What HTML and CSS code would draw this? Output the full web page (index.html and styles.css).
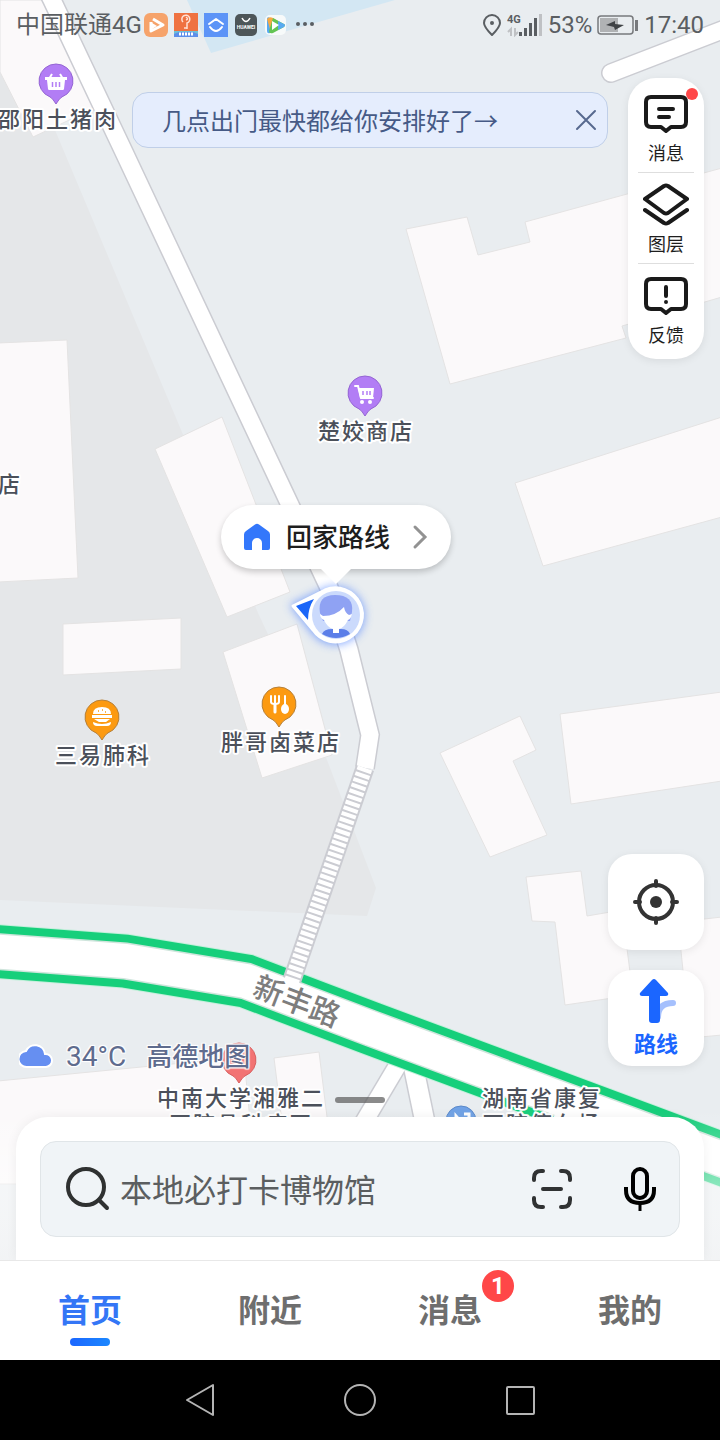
FILE: index.html
```html
<!DOCTYPE html>
<html lang="zh-CN">
<head>
    <meta charset="UTF-8">
    <meta name="viewport" content="width=device-width, initial-scale=1.0">
    <title>高德地图</title>
    <link rel="stylesheet" href="styles.css">
</head>
<body>
    <div class="app">
        <!-- map canvas -->
        <div class="map">
            <svg class="map-canvas" viewBox="0 0 720 1440" preserveAspectRatio="xMidYMin slice">
                <defs>
                    <path id="pin" d="M0 -17a17 17 0 0 1 6 32.900Q3.500 17 0 23Q-3.500 17 -6 15.900A17 17 0 0 1 0 -17z"/>
                    <filter id="glow" x="-50%" y="-50%" width="200%" height="200%">
                        <feGaussianBlur stdDeviation="5"/>
                    </filter>
                    <linearGradient id="fade" x1="0" y1="0" x2="0" y2="1">
                        <stop offset="0" stop-color="#fff" stop-opacity="0"/>
                        <stop offset="0.5" stop-color="#fff" stop-opacity="0.5"/>
                        <stop offset="1" stop-color="#f4f5f6" stop-opacity="0.8"/>
                    </linearGradient>
                </defs>

                <polygon class="zone" points="0,0 0,900 367,916 376,888 327,760 258,613 55,130 0,0"/>
                <polygon class="water" points="187,0 211,53 395,0"/>

                <g class="building">
                    <polygon points="0,0 46,0 95,108 33,137 0,72"/>
                    <polygon points="-2,343 67,340 78,578 -2,582"/>
                    <polygon points="155,449 222,417 290,592 227,617"/>
                    <polygon points="63,624 181,618 181,669 63,675"/>
                    <polygon points="223,652 297,624 332,755 262,778"/>
                    <polygon points="406,229 467,217 478,255 530,242 525,222 722,168 722,297 622,326 626,338 450,384"/>
                    <polygon points="515,483 722,417 722,517 543,566"/>
                    <polygon points="440,753 520,716 536,750 513,761 547,835 490,857"/>
                    <polygon points="560,714 722,692 722,781 571,804"/>
                    <polygon points="526,877 581,871 587,916 622,910 633,995 565,1005 555,922 532,921"/>
                    <polygon points="678,922 722,917 722,1035 690,1038"/>
                    <polygon points="-2,1081 244,1057 256,1184 -2,1184"/>
                    <polygon points="274,1058 319,1052 328,1125 283,1130"/>
                </g>

                <g class="road-edge">
                    <path d="M402 1058L358 1132" stroke-width="20"/>
                    <path d="M410 1050L427 1132" stroke-width="22"/>
                    <path d="M611 73L730 27" stroke-width="20" stroke-linecap="round"/>
                    <path d="M42 -20L52 0L123 150L283 490L330 590L349 650L370 735L365 768" stroke-width="20"/>
                </g>
                <g class="road-fill">
                    <path d="M402 1058L358 1132" stroke-width="17"/>
                    <path d="M410 1050L427 1132" stroke-width="19"/>
                    <path d="M611 73L730 27" stroke-width="17" stroke-linecap="round"/>
                    <path d="M42 -20L52 0L123 150L283 490L330 590L349 650L370 735L365 768" stroke-width="17"/>
                </g>

                <!-- main road with traffic -->
                <path class="traffic-edge" d="M-10 951L125 961L246 981L370 1028L730 1162"/>
                <path class="traffic" d="M-10 951L125 961L246 981L370 1028L730 1162"/>
                <path class="traffic-line" d="M-10 951L125 961L246 981L370 1028L730 1162"/>
                <path class="traffic-road" d="M-10 951L125 961L246 981L370 1028L730 1162"/>

                <!-- footpath steps -->
                <path class="steps-edge" d="M365 768L292 980"/>
                <path class="steps" d="M365 768L290 986"/>

                <text class="road-name" transform="translate(297 1001) rotate(21)" y="11" text-anchor="middle">新丰路</text>

                <!-- shops -->
                <g transform="translate(56 81)">
                    <use href="#pin" class="pin-purple"/>
                    <path fill="none" stroke="#fff" stroke-width="2" d="M-4 -7L-7 -2M4 -7L7 -2"/>
                    <path fill="#fff" d="M-11 -4h22v3h-2l-1 9q-.3 1-1 1h-14q-.7 0-1-1l-1-9h-2z"/>
                    <path stroke="#b27df5" stroke-width="1.500" d="M-3.500 1v5M0 1v5M3.500 1v5"/>
                </g>
                <g transform="translate(365 393)">
                    <use href="#pin" class="pin-purple"/>
                    <path fill="none" stroke="#fff" stroke-width="2" stroke-linecap="round" d="M-10 -7h3l3 12h12"/>
                    <path fill="#fff" d="M-7 -5H9L8 5H-5z"/>
                    <path stroke="#b27df5" stroke-width="1.500" d="M-2 -2v4M2 -2v4M5 -2v4"/>
                    <circle cx="-3" cy="9" r="2" fill="#fff"/>
                    <circle cx="5" cy="9" r="2" fill="#fff"/>
                </g>
                <g transform="translate(102 717)">
                    <use href="#pin" class="pin-orange"/>
                    <path fill="#fff" d="M-9 -3q0-7 9-7t9 7zM-10 -2h20v3h-20zM-9 5q9 4 18 0q0 4-4 4H-5q-4 0-4-4zM-8 2H8L4 5H-3z"/>
                    <path stroke="#fc9a11" stroke-width="1.500" d="M-4 -6h1M0 -7h1M3 -5h1"/>
                </g>
                <g transform="translate(279 704)">
                    <use href="#pin" class="pin-orange"/>
                    <path fill="none" stroke="#fff" stroke-width="2" stroke-linecap="round" d="M-8 -8v6q0 2 4 2t4-2v-6M-4 -8v16M6 -8V3"/>
                    <path stroke="#fff" stroke-width="3" stroke-linecap="round" d="M-4 0v8"/>
                    <ellipse cx="6" cy="5" rx="4" ry="5" fill="#fff"/>
                </g>
                <g transform="translate(239 1060)">
                    <use href="#pin" class="pin-red"/>
                </g>
                <g transform="translate(461 1121)">
                    <circle r="15" class="pin-blue"/>
                    <path fill="none" stroke="#fff" stroke-width="3" d="M-5 4v-9l7 8M3 -7h5v9"/>
                </g>

                <g class="poi-name">
                    <text x="-2" y="127">邵阳土猪肉</text>
                    <text x="318" y="439">楚姣商店</text>
                    <text x="-2" y="492">店</text>
                    <text x="55" y="763">三易肺科</text>
                    <text x="221" y="750">胖哥卤菜店</text>
                    <text x="157" y="1106">中南大学湘雅二</text>
                    <text x="169" y="1132">医院骨科病区</text>
                    <text x="482" y="1106">湖南省康复</text>
                    <text x="482" y="1132">医院停车场</text>
                </g>

                <!-- my location -->
                <path fill="#4c80ff" opacity="0.700" filter="url(#glow)" d="M290 605L326 588A29 29 0 1 1 313 634z"/>
                <path fill="#fff" stroke="#fff" stroke-width="3" stroke-linejoin="round" d="M293 606L325 590A27 27 0 1 1 313 630z"/>
                <path fill="#1b66f8" d="M296 606L314 599Q308 608 308 620z"/>
                <circle cx="336" cy="615" r="24" fill="#cbdafc"/>
                <path fill="#5b7ee8" d="M322 634q2-5 10-5h9q7 0 9 5q-14 8-28 0z"/>
                <path fill="#8fa2f3" d="M320 613q-3-18 15-18q19 0 17 17l-2 9h-27z"/>
                <path fill="#fff" d="M323 616q13 0 21-9q1 6 5 8l3-1q-1 5-4 6q-4 8-9 9v4h-6v-4q-6-2-9-9q-4-2-4-6z"/>

                <rect y="1110" width="720" height="150" fill="url(#fade)"/>
            </svg>

            <button class="home-route">
                <svg width="26" height="28" viewBox="0 0 26 28"><path fill="#3377fb" d="M11 1.500q2-1.500 4 0l9 6.500q2 1.300 2 3.500V25q0 2-2 2h-6v-7a5 5 0 0 0-10 0v7H2q-2 0-2-2V11.500Q0 9.300 2 8z"/></svg>
                <span>回家路线</span>
                <svg width="16" height="26" viewBox="0 0 16 26"><path fill="none" stroke="#929292" stroke-width="3" stroke-linecap="round" d="M3 3l10 10L3 23"/></svg>
            </button>
        </div>

        <header class="status-bar">
            <div class="status-left">
                <span>中国联通4G</span>
                <svg width="24" height="24" viewBox="0 0 24 24"><rect width="24" height="24" rx="6" fill="#f6a36b"/><path fill="none" stroke="#fff" stroke-width="3" stroke-linejoin="round" d="M7 9v9l12-6L9 6"/><path fill="#fff" d="M8 10l5 3-5 3z"/></svg>
                <svg width="24" height="24" viewBox="0 0 24 24"><path fill="#ef7241" d="M0 0h24v24H0z"/><path fill="#6cc0d8" d="M0 18h24v6H0z"/><path fill="#5d8eea" d="M0 21l5-2h14l5 2v3H0z"/><path fill="none" stroke="#ffe1d4" stroke-width="1.500" d="M9 9a4 4 0 1 1 4 1v6M12 4q3 2 0 3M10 15h3"/><path stroke="#fff" stroke-width="3" stroke-dasharray="2 1" d="M5 21h14"/></svg>
                <svg width="24" height="24" viewBox="0 0 24 24"><path fill="#5c94f7" d="M0 0h24v24H0z"/><path fill="none" stroke="#fff" stroke-width="2" stroke-linecap="round" stroke-linejoin="round" d="M5 11l7-5 7 5M6 14q6 8 12 0"/></svg>
                <svg width="24" height="24" viewBox="0 0 24 24"><rect x="1" y="1" width="22" height="22" rx="5" fill="#4d5659"/><path fill="none" stroke="#fff" stroke-width="1.500" d="M8 5q4 7 8 0"/><text x="12" y="16" class="tiny" text-anchor="middle">HUAWEI</text></svg>
                <svg width="24" height="24" viewBox="0 0 24 24"><rect x="1" y="2" width="21" height="20" rx="5" fill="#f7fafa"/><path fill="#57aaf0" d="M3 6q0-3 3-1l5 3-5 12q-3 1-3-2z"/><path fill="#f6a944" d="M3 6q2-3 6-1l5 3-8 8z"/><path fill="#63c454" d="M9 5l11 6q2 1 0 3l-11 6q-4 1-4-2z"/><path fill="#57aaf0" d="M14 8l6 3q2 1 0 3l-6 3z"/><path fill="#fff" d="M8 8l7 4-7 5z"/></svg>
                <svg width="24" height="24" viewBox="0 0 24 24"><g fill="#5a5e62"><circle cx="4" cy="11" r="2"/><circle cx="11" cy="11" r="2"/><circle cx="18" cy="11" r="2"/></g></svg>
            </div>
            <div class="status-right">
                <svg width="20" height="24" viewBox="0 0 20 24"><path fill="none" stroke="#5a5e62" stroke-width="2" stroke-linejoin="round" d="M10 2a8 8 0 0 1 8 8q0 4-8 12q-8-8-8-12a8 8 0 0 1 8-8z"/><circle cx="10" cy="10" r="2" fill="#5a5e62"/></svg>
                <svg width="36" height="24" viewBox="0 0 36 24"><text x="0" y="10" class="net">4G</text><path fill="none" stroke="#bfc1c4" stroke-width="2" d="M4 23v-7l-3 3M8 15v7l3-3"/><path fill="#5a5e62" d="M12 19h3v4h-3zM17 15h3v8h-3zM22 10h3v13h-3zM27 5h3v18h-3z"/><path fill="#bfc1c4" d="M32 1h3v22h-3z"/></svg>
                <span>53%</span>
                <svg width="42" height="20" viewBox="0 0 42 20"><rect x="1" y="1" width="35" height="18" rx="3" fill="none" stroke="#77797c" stroke-width="1.500"/><path fill="#b0b2b4" d="M3 3h18v14H3z"/><path fill="#77797c" d="M38 5h3v11h-3z"/><path fill="#404346" d="M9 10l9-4v3l9 1-9 5-1-3z"/></svg>
                <span>17:40</span>
            </div>
        </header>

        <div class="top-row">
            <div class="banner">
                <a href="#">几点出门最快都给你安排好了→</a>
                <button class="close" aria-label="关闭">
                    <svg width="22" height="22" viewBox="0 0 22 22"><path stroke="#57698f" stroke-width="2" stroke-linecap="round" d="M2 2l18 18M20 2L2 20"/></svg>
                </button>
            </div>
            <nav class="tools">
                <button class="tool">
                    <svg width="46" height="44" viewBox="0 0 46 44"><path class="line" d="M8 5h30q5 0 5 5v20q0 5-5 5H28l-5 4-5-4H8q-5 0-5-5V10q0-5 5-5z"/><path class="line" d="M16 17h14M16 25h10"/></svg>
                    <span>消息</span>
                    <i class="dot"></i>
                </button>
                <button class="tool">
                    <svg width="46" height="44" viewBox="0 0 46 44"><path class="line" d="M21 3q2-1 4 0l19 13-19 14q-2 1-4 0L2 16zM2 27l19 13q2 1 4 0l19-13"/></svg>
                    <span>图层</span>
                </button>
                <button class="tool">
                    <svg width="46" height="44" viewBox="0 0 46 44"><path class="line" d="M8 5h30q5 0 5 5v20q0 5-5 5H28l-5 4-5-4H8q-5 0-5-5V10q0-5 5-5z"/><path class="line" d="M23 13v9M23 28v0"/></svg>
                    <span>反馈</span>
                </button>
            </nav>
        </div>

        <div class="map-row">
            <div class="weather">
                <svg width="36" height="28" viewBox="0 0 36 28"><path fill="#668ff1" stroke="#fff" stroke-width="2" d="M8 25a8 8 0 0 1-1-16a10 10 0 0 1 19 3a6.500 6.500 0 0 1 1 13z"/></svg>
                <span class="temp">34°C</span>
                <span class="brand">高德地图</span>
            </div>
            <div class="map-buttons">
                <button class="map-button" aria-label="定位">
                    <svg width="48" height="48" viewBox="0 0 48 48"><circle cx="24" cy="24" r="17" fill="none" stroke="#333" stroke-width="4"/><circle cx="24" cy="24" r="6" fill="#333"/><path stroke="#333" stroke-width="4" stroke-linecap="round" d="M24 3v5M24 40v5M3 24h5M40 24h5"/></svg>
                </button>
                <button class="map-button">
                    <svg width="48" height="48" viewBox="0 0 48 48"><path fill="none" stroke="#a5c0fd" stroke-width="6" stroke-linecap="round" d="M26 40q0-14 15-14"/><path fill="#1b66ff" d="M20 3q2-2 4 0l12 13q1 3-2 3h-6v24q0 3-3 3h-5q-3 0-3-3V19h-7q-3 0-2-3z"/></svg>
                    <span>路线</span>
                </button>
            </div>
        </div>

        <div class="handle"></div>

        <section class="sheet">
            <form class="search">
                <label for="keyword">
                    <svg width="44" height="44" viewBox="0 0 44 44"><circle cx="20" cy="20" r="18" fill="none" stroke="#2f3131" stroke-width="4"/><path stroke="#2f3131" stroke-width="4" stroke-linecap="round" d="M33 33l8 8"/></svg>
                </label>
                <input type="text" id="keyword" placeholder="本地必打卡博物馆" aria-label="搜索">
                <button type="button" aria-label="扫一扫">
                    <svg width="40" height="40" viewBox="0 0 40 40"><path fill="none" stroke="#303233" stroke-width="4" stroke-linecap="round" d="M2 11V9q0-7 7-7h2M29 2h2q7 0 7 7v2M38 29v2q0 7-7 7h-2M11 38H9q-7 0-7-7v-2M11 20h18"/></svg>
                </button>
                <button type="button" aria-label="语音">
                    <svg width="32" height="44" viewBox="0 0 32 44"><g fill="none" stroke="#000"><rect x="9" y="2" width="14" height="29" rx="7" stroke-width="4"/><path stroke-width="4" d="M2 20v3q0 13 14 13t14-13v-3"/><path stroke-width="3" d="M16 36v8"/></g></svg>
                </button>
            </form>
        </section>

        <nav class="tabs">
            <a href="#" class="tab active">首页</a>
            <a href="#" class="tab">附近</a>
            <a href="#" class="tab">消息<span class="badge">1</span></a>
            <a href="#" class="tab">我的</a>
        </nav>

        <footer class="system-nav">
            <button aria-label="返回"><svg width="34" height="34" viewBox="0 0 34 34"><path d="M30 2v30L4 17z"/></svg></button>
            <button aria-label="主屏幕"><svg width="34" height="34" viewBox="0 0 34 34"><circle cx="17" cy="17" r="15"/></svg></button>
            <button aria-label="最近任务"><svg width="34" height="34" viewBox="0 0 34 34"><rect x="4" y="4" width="27" height="27" rx="1"/></svg></button>
        </footer>
    </div>
</body>
</html>
```
FILE: styles.css
```css
* {
    box-sizing: border-box;
}

body {
    margin: 0;
    font-family: Roboto, "Noto Sans CJK SC", sans-serif;
    color: #1e1e1e;
}

button {
    border: 0;
    padding: 0;
    background: none;
    font-family: inherit;
    color: inherit;
    cursor: pointer;
}

a {
    color: inherit;
    text-decoration: none;
}

svg {
    display: block;
    flex-shrink: 0;
}

.app {
    position: relative;
    min-height: 100vh;
    display: flex;
    flex-direction: column;
    overflow: hidden;
    background: #e9edf0;
}

/* map */
.map {
    position: absolute;
    inset: 0;
}

.map-canvas {
    width: 100%;
    height: 100%;
}

.zone {
    fill: #e5e7e9;
}

.water {
    fill: #d3e7f3;
}

.building {
    fill: #fbf9fa;
    stroke: #e4e3e3;
    stroke-width: 1;
}

.road-edge {
    fill: none;
    stroke: #cbccd2;
}

.road-fill {
    fill: none;
    stroke: #fff;
}

.traffic-edge,
.traffic,
.traffic-line,
.traffic-road {
    fill: none;
    stroke: #c4efdb;
    stroke-width: 55px;
}

.traffic {
    stroke: #16cf7b;
    stroke-width: 53px;
}

.traffic-line {
    stroke: #cfe5dc;
    stroke-width: 37px;
}

.traffic-road {
    stroke: #fff;
    stroke-width: 34px;
}

.steps-edge {
    stroke: #cbccd2;
    stroke-width: 19px;
}

.steps {
    stroke: #fff;
    stroke-width: 15px;
    stroke-dasharray: 4 2;
}

.road-name {
    font-size: 30px;
    font-weight: 500;
    fill: #7d7d7d;
    stroke: #fff;
    stroke-width: 3px;
    paint-order: stroke;
}

.poi-name {
    font-size: 22px;
    font-weight: 500;
    letter-spacing: 2px;
    fill: #4b505a;
    stroke: #fff;
    stroke-width: 4px;
    stroke-linejoin: round;
    paint-order: stroke;
}

.pin-purple {
    fill: #b27df5;
    stroke: #9465d3;
}

.pin-orange {
    fill: #fc9a11;
    stroke: #b5803a;
}

.pin-red {
    fill: #f27373;
    stroke: #d86060;
}

.pin-blue {
    fill: #70a2e6;
    stroke: #5b89c9;
}

.home-route {
    position: absolute;
    left: 221px;
    top: 505px;
    height: 64px;
    padding: 0 23px;
    display: flex;
    align-items: center;
    border-radius: 32px;
    background: #fff;
    box-shadow: 0 3px 6px rgba(0, 0, 0, 0.2);
    font-size: 26px;
    font-weight: 500;
}

.home-route span {
    margin: 0 22px 0 16px;
    padding-bottom: 4px;
}

.home-route::after {
    content: "";
    position: absolute;
    left: 50%;
    top: 100%;
    margin-left: -15px;
    border: 15px solid transparent;
    border-top-color: #fff;
    border-bottom: 0;
}

/* status bar */
.status-bar {
    position: relative;
    display: flex;
    justify-content: space-between;
    align-items: center;
    height: 50px;
    padding: 0 16px;
    font-size: 24px;
    line-height: 28px;
    color: #5a5e62;
}

.status-left,
.status-right {
    display: flex;
    align-items: center;
    gap: 6px;
}

.status-right {
    gap: 5px;
}

.status-left span {
    margin-right: -4px;
}

.tiny {
    font-size: 5px;
    font-weight: 700;
    fill: #fff;
}

.net {
    font-size: 11px;
    font-weight: 700;
    fill: #5a5e62;
}

/* banner and tools */
.top-row {
    position: relative;
    display: flex;
    align-items: flex-start;
    gap: 20px;
    margin-top: 28px;
    padding: 0 16px 0 132px;
}

.banner {
    flex: 1;
    display: flex;
    justify-content: space-between;
    align-items: center;
    height: 56px;
    margin-top: 14px;
    padding: 0 10px 0 29px;
    border: 1px solid #c0cfe8;
    border-radius: 16px;
    background: #e5edfd;
    font-size: 24px;
    color: #465a86;
}

.banner a {
    padding-bottom: 2px;
}

.tools {
    width: 76px;
    padding: 4px 0;
    border-radius: 28px;
    background: #fff;
    box-shadow: 0 2px 8px rgba(0, 0, 0, 0.08);
}

.tool {
    position: relative;
    display: flex;
    flex-direction: column;
    align-items: center;
    gap: 7px;
    width: 56px;
    margin: 0 auto;
    padding: 10px 0 7px;
    border-bottom: 1px solid #dedede;
    font-size: 18px;
    line-height: 22px;
}

.tool:last-child {
    border-color: transparent;
}

.line {
    fill: none;
    stroke: #1a1a1a;
    stroke-width: 4px;
    stroke-linecap: round;
    stroke-linejoin: round;
}

.dot {
    position: absolute;
    top: 6px;
    right: -4px;
    width: 12px;
    height: 12px;
    border-radius: 50%;
    background: #ff4748;
}

/* lower map controls */
.map-row {
    position: relative;
    flex: 1;
    display: flex;
    justify-content: space-between;
    align-items: flex-end;
    padding: 0 16px;
}

.weather {
    display: flex;
    align-items: center;
    height: 36px;
    padding-left: 3px;
    color: #5f6c8e;
    text-shadow: 0 0 2px #fff, 1px 1px 1px #fff, -1px -1px 1px #fff, 1px -1px 1px #fff, -1px 1px 1px #fff;
}

.temp {
    margin: 0 20px 0 11px;
    font-size: 28px;
}

.brand {
    padding-bottom: 4px;
    font-size: 26px;
    font-weight: 500;
}

.map-buttons {
    display: flex;
    flex-direction: column;
    gap: 20px;
    padding-bottom: 8px;
}

.map-button {
    display: flex;
    flex-direction: column;
    justify-content: center;
    align-items: center;
    gap: 6px;
    width: 96px;
    height: 96px;
    border-radius: 24px;
    background: #fff;
    box-shadow: 0 2px 8px rgba(0, 0, 0, 0.08);
    font-size: 22px;
    font-weight: 700;
    line-height: 28px;
    color: #1b66ff;
}

.handle {
    position: relative;
    width: 50px;
    height: 6px;
    margin: 23px auto 14px;
    border-radius: 3px;
    background: rgba(90, 90, 90, 0.7);
}

/* search sheet */
.sheet {
    position: relative;
    margin: 0 16px;
    padding: 24px 24px 23px;
    border-radius: 32px 32px 0 0;
    background: #fff;
    box-shadow: 0 0 12px rgba(0, 0, 0, 0.06);
}

.search {
    display: flex;
    align-items: center;
    height: 96px;
    padding: 0 23px 0 25px;
    border: 1px solid #e0e5e8;
    border-radius: 16px;
    background: #f0f4f7;
}

.search input {
    flex: 1;
    min-width: 0;
    margin: 0 16px 0 10px;
    padding: 4px 0 0;
    border: 0;
    outline: 0;
    background: none;
    font-family: inherit;
    font-size: 32px;
    color: #1e1e1e;
}

.search input::placeholder {
    color: #5b5e60;
}

.search button + button {
    margin-left: 52px;
}

/* tabs */
.tabs {
    position: relative;
    display: flex;
    height: 100px;
    border-top: 1px solid #e8e8e8;
    background: #fff;
}

.tab {
    position: relative;
    flex: 1;
    text-align: center;
    font-size: 32px;
    font-weight: 700;
    line-height: 100px;
    color: #6e6e6e;
}

.active {
    color: #3476f6;
}

.active::after {
    content: "";
    position: absolute;
    left: 50%;
    bottom: 14px;
    width: 40px;
    height: 8px;
    margin-left: -20px;
    border-radius: 4px;
    background: linear-gradient(90deg, #1b66ff, #1b87ff);
}

.badge {
    position: absolute;
    left: 50%;
    top: 9px;
    width: 32px;
    height: 32px;
    margin-left: 32px;
    border-radius: 50%;
    background: #ff4748;
    font-size: 24px;
    line-height: 32px;
    color: #fff;
}

.system-nav {
    position: relative;
    display: flex;
    justify-content: center;
    gap: 126px;
    height: 80px;
    background: #000;
}

.system-nav svg {
    fill: none;
    stroke: #b4b4b4;
    stroke-width: 2px;
    stroke-linejoin: round;
}
```
